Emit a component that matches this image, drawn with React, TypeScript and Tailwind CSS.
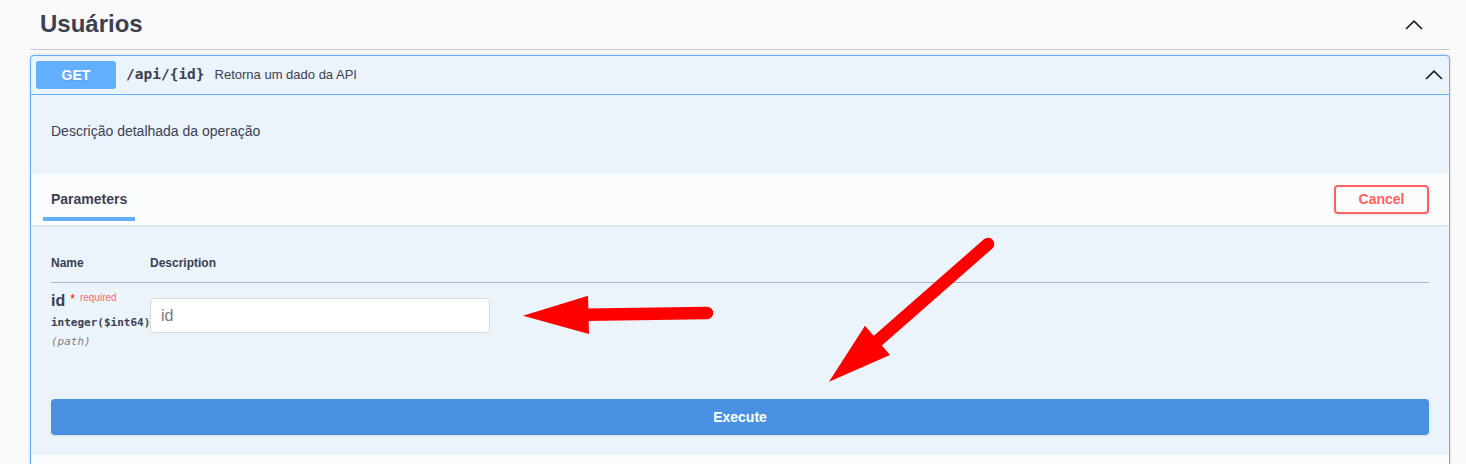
import React from 'react';

const sans = { fontFamily: '"Liberation Sans", Arial, sans-serif' };

function Chevron({ className }: { className?: string }) {
  return (
    <svg className={className} width="18" height="10" viewBox="0 0 18 10" fill="none">
      <polyline points="1,9 9,1.2 17,9" stroke="#1b1b1b" strokeWidth="1.6" strokeLinejoin="miter" />
    </svg>
  );
}

// the two red annotation arrows drawn over the page
function Arrows() {
  return (
    <svg className="absolute inset-0 pointer-events-none" width="1466" height="464" viewBox="0 0 1466 464">
      <line x1="707" y1="313" x2="586" y2="314.7" stroke="#ff0000" strokeWidth="12.5" strokeLinecap="round" />
      <polygon points="523,315.7 588,295.7 589,334" fill="#ff0000" />
      <line x1="988" y1="244" x2="874" y2="344" stroke="#ff0000" strokeWidth="12.5" strokeLinecap="round" />
      <polygon points="829,381.7 865,325.7 890,355" fill="#ff0000" />
    </svg>
  );
}

export default function App() {
  return (
    <div className="relative min-h-[464px] bg-[#fafafa] text-[#3b4151] overflow-hidden" style={sans}>
      <div className="ml-[30px] w-[1420px]">
        {/* tag heading */}
        <div className="flex items-center justify-between pl-[10px] pr-[27px] pt-[9px] pb-[10px] border-b border-[#c4c6cb]">
          <h3 className="text-[24px] leading-[30px] font-bold">Usuários</h3>
          <Chevron className="mt-[1px]" />
        </div>

        {/* operation block */}
        <div className="mt-[5px] border border-[#61affe] rounded-[4px] bg-[#ebf3fb] shadow-[0_0_3px_rgba(0,0,0,0.19)]">
          <div className="flex items-center h-[39px] px-[5px] border-b border-[#61affe]">
            <span className="w-[80px] h-[28px] flex items-center justify-center rounded-[3px] bg-[#61affe] text-white text-[14px] font-bold [text-shadow:0_1px_0_rgba(0,0,0,0.1)]">
              GET
            </span>
            <span className="px-[10px] text-[14.5px] font-bold" style={{ fontFamily: '"DejaVu Sans Mono", "Liberation Mono", monospace' }}>
              /api/{'{id}'}
            </span>
            <span className="text-[13px]">Retorna um dado da API</span>
            <Chevron className="ml-auto mr-[1px]" />
          </div>

          <div className="h-[79px] px-[20px] pt-[26px]">
            <p className="text-[14px] leading-[20px]">Descrição detalhada da operação</p>
          </div>

          <div className="flex items-center justify-between h-[51px] pl-[12px] pr-[20px] bg-[#fbfcfe] shadow-[0_1px_2px_rgba(0,0,0,0.1)]">
            <div className="self-stretch flex flex-col pt-[15px]">
              <span className="px-[8px] text-[14px] leading-[20px] font-bold">Parameters</span>
              <span className="mt-[8px] h-[4px] bg-[#61affe]" />
            </div>
            <button className="w-[95px] h-[29px] rounded-[4px] border-2 border-[#ff6060] bg-transparent text-[#ff6060] text-[14px] font-bold shadow-[0_1px_2px_rgba(0,0,0,0.1)]">
              Cancel
            </button>
          </div>

          <div className="px-[20px] pb-[20px]">
            <div className="flex pt-[29px] pb-[10px] border-b border-[#aeb4be] text-[12px] leading-[18px] font-bold">
              <span className="w-[99px]">Name</span>
              <span>Description</span>
            </div>

            <div className="flex items-start">
              <div className="w-[99px] pt-[8px]">
                <div className="flex items-start h-[20px]">
                  <span className="text-[16px] leading-[20px] font-bold">id</span>
                  <span className="ml-[5px] text-[12px] leading-[12px] text-[#ff0000] mt-[2px]">*</span>
                  <span className="ml-[5px] text-[10px] leading-[12px] text-[#ff6a6a] mt-[1px]">required</span>
                </div>
                <div className="mt-[4px] text-[11px] leading-[16px] font-bold" style={{ fontFamily: '"DejaVu Sans Mono", "Liberation Mono", monospace' }}>
                  integer($int64)
                </div>
                <div className="mt-[3px] text-[11px] leading-[16px] italic text-[#808080]" style={{ fontFamily: '"DejaVu Sans Mono", "Liberation Mono", monospace' }}>
                  (path)
                </div>
              </div>
              <input
                placeholder="id"
                className="mt-[15px] w-[340px] h-[35px] px-[10px] rounded-[4px] border border-[#d9d9d9] bg-white text-[16px] placeholder:text-[#7a7a7a] outline-none"
                style={sans}
              />
            </div>

            <button className="mt-[49px] w-full h-[36px] rounded-[4px] bg-[#4990e2] text-white text-[14px] font-bold shadow-[0_1px_2px_rgba(0,0,0,0.1)]">
              Execute
            </button>
          </div>

          <div className="h-[40px] bg-[#fbfcfe] shadow-[0_1px_2px_rgba(0,0,0,0.1)]" />
        </div>
      </div>
      <Arrows />
    </div>
  );
}
